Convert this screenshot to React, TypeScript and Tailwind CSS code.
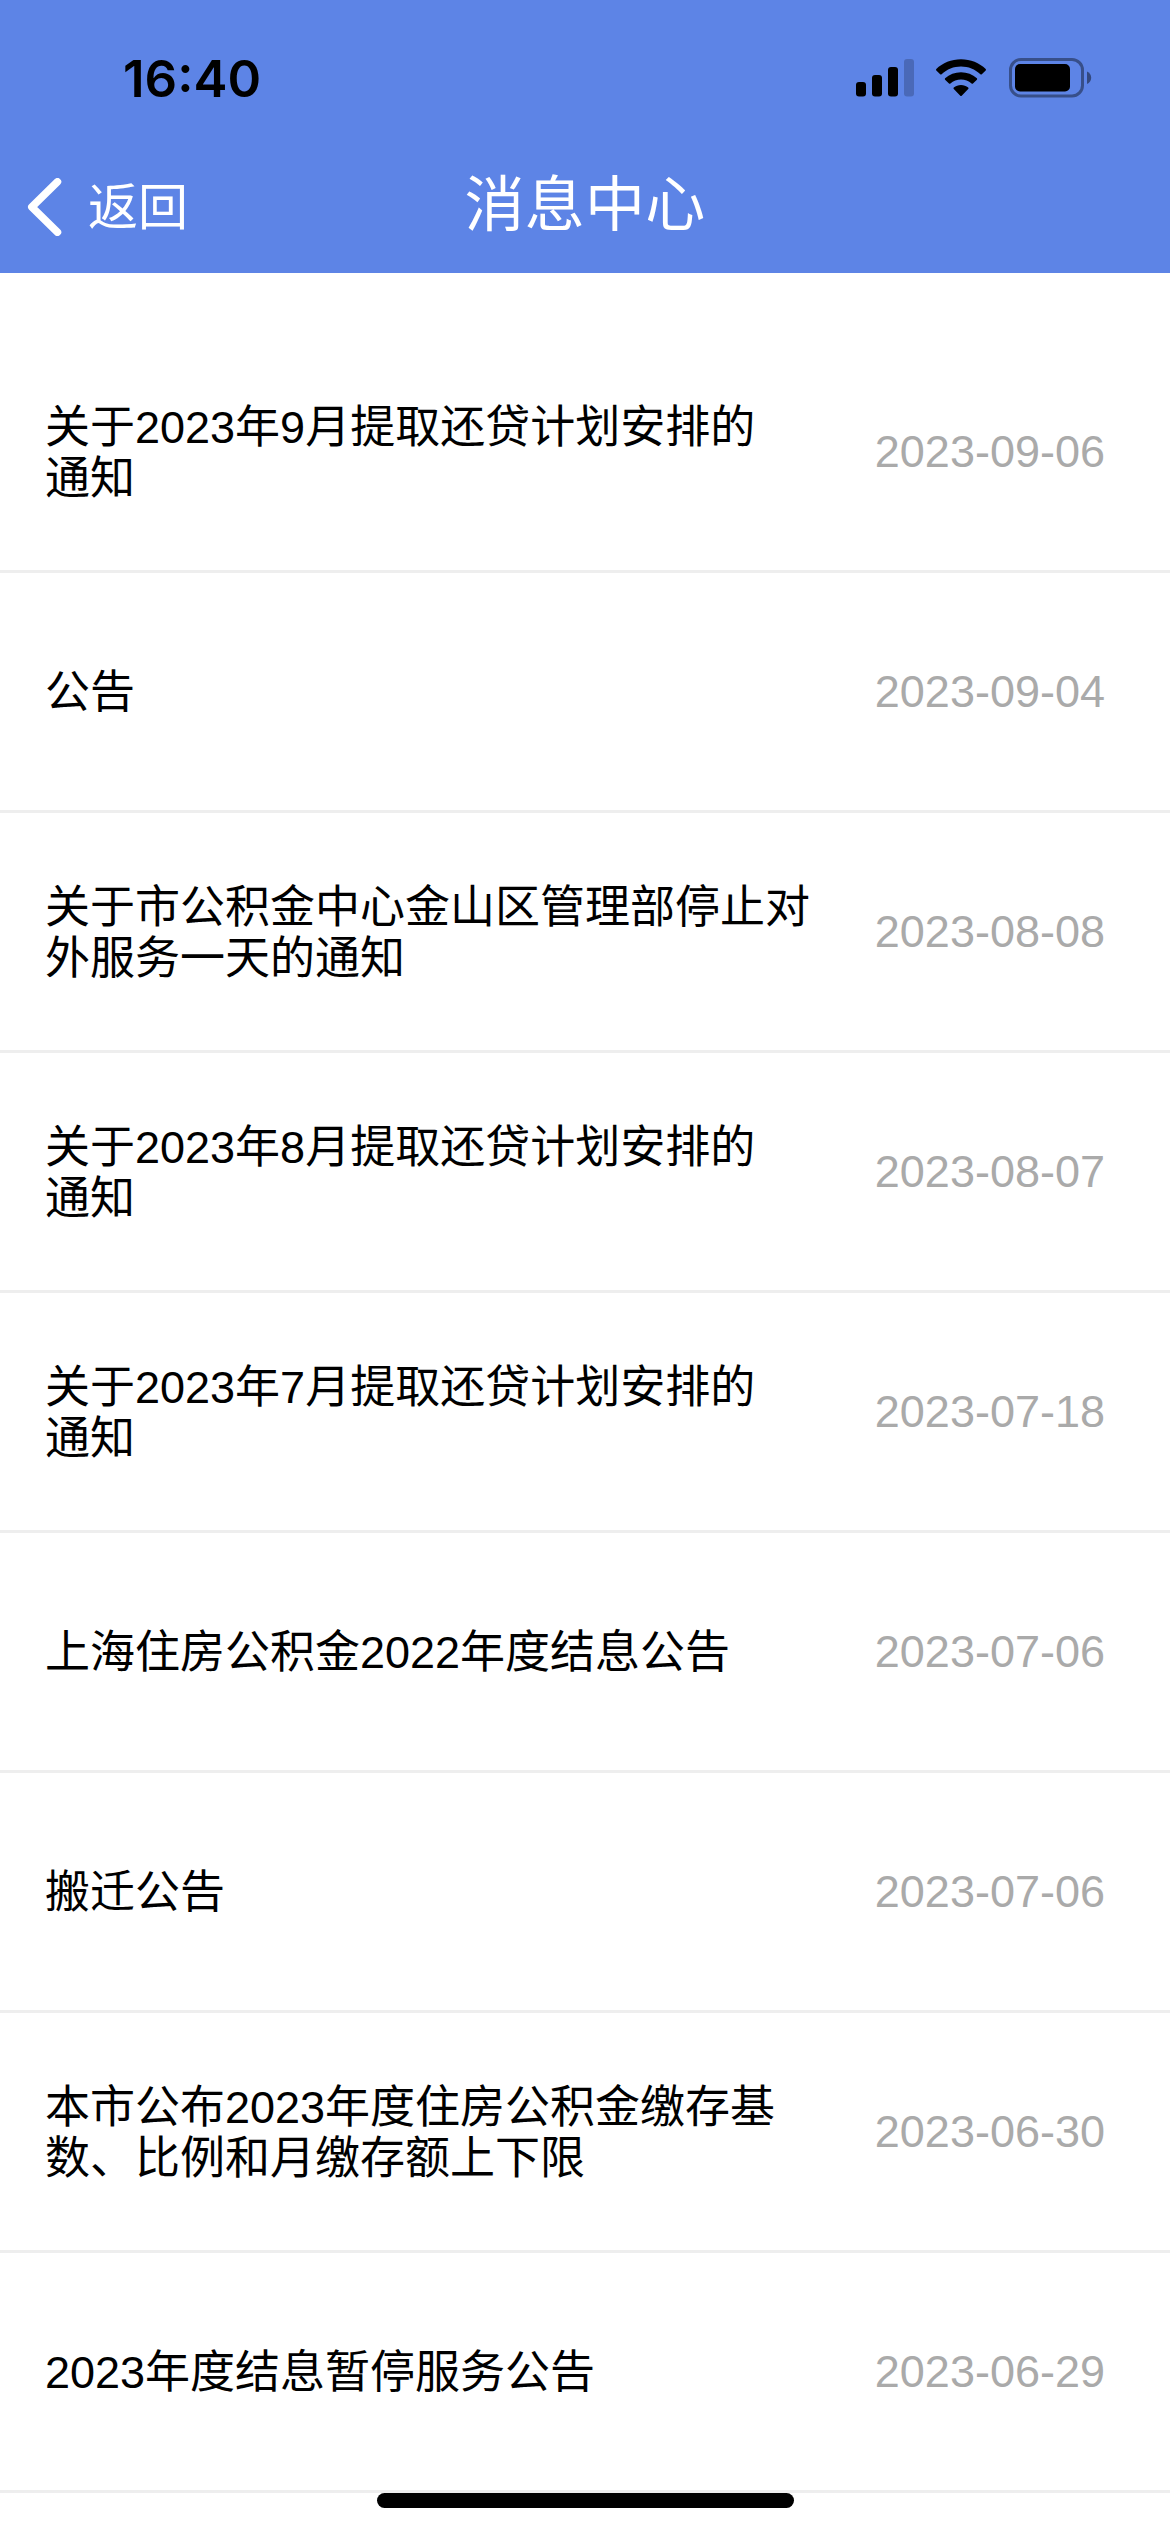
const messages = [
  { title: '关于2023年9月提取还贷计划安排的\n通知', date: '2023-09-06' },
  { title: '公告', date: '2023-09-04' },
  { title: '关于市公积金中心金山区管理部停止对\n外服务一天的通知', date: '2023-08-08' },
  { title: '关于2023年8月提取还贷计划安排的\n通知', date: '2023-08-07' },
  { title: '关于2023年7月提取还贷计划安排的\n通知', date: '2023-07-18' },
  { title: '上海住房公积金2022年度结息公告', date: '2023-07-06' },
  { title: '搬迁公告', date: '2023-07-06' },
  { title: '本市公布2023年度住房公积金缴存基\n数、比例和月缴存额上下限', date: '2023-06-30' },
  { title: '2023年度结息暂停服务公告', date: '2023-06-29' },
];

function SignalIcon() {
  return (
    <svg className="h-[38px] w-[58px]" viewBox="0 0 58 38">
      <rect x="0" y="23" width="10" height="14.5" rx="3" />
      <rect x="16" y="16" width="10" height="21.5" rx="3" />
      <rect x="32" y="8" width="10" height="29.5" rx="3" />
      <rect x="48" y="0" width="10" height="37.5" rx="3" opacity=".2" />
    </svg>
  );
}

function WifiIcon() {
  return (
    <svg className="ml-[22px] h-[38px] w-[50px]" viewBox="0 0 50 38">
      <path d="M25 0.3C34.5 .3 43.500 4 49.700 10Q50.300 10.800 49.700 11.500L45.800 15.300Q45.100 15.900 44.400 15.300C39 10.300 32.300 7.600 25 7.600S11 10.300 5.600 15.300Q4.900 15.900 4.200 15.300L.3 11.500Q-.3 10.800 .3 10C6.500 4 15.500 .3 25 .3Z" />
      <path d="M25 13.200C31 13.200 36.600 15.400 40.900 19.300Q41.500 20 40.900 20.700L37 24.500Q36.300 25.100 35.600 24.500C32.700 21.900 29 20.500 25 20.500S17.300 21.900 14.400 24.500Q13.700 25.100 13 24.500L9.100 20.700Q8.500 20 9.100 19.300C13.400 15.400 19 13.200 25 13.200Z" />
      <path d="M25 26C27.700 26 30.200 26.900 32.200 28.500Q33 29.300 32.200 30.100L25.700 36.700Q25 37.300 24.300 36.700L17.800 30.100Q17 29.300 17.800 28.500C19.800 26.900 22.300 26 25 26Z" />
    </svg>
  );
}

function BatteryIcon() {
  return (
    <svg className="ml-[23px] h-[40px] w-[83px]" viewBox="0 0 83 40">
      <rect x="1.500" y="1.500" width="72" height="36.500" rx="10.500" fill="none" stroke="#000" strokeWidth="3" opacity=".4" />
      <rect x="6" y="6" width="55" height="27.500" rx="5" />
      <path d="M78 13.500C80.600 14.600 82.200 17 82.200 19.700S80.600 24.900 78 26Z" opacity=".45" />
    </svg>
  );
}

function StatusBar() {
  return (
    <div className="flex h-[156px] items-center justify-between pl-[123px] pr-[78px]">
      <span className="font-['Inter'] text-[51px] font-semibold leading-none text-black">16:40</span>
      <div className="flex items-center">
        <SignalIcon />
        <WifiIcon />
        <BatteryIcon />
      </div>
    </div>
  );
}

export default function App() {
  return (
    <div className="relative h-[2532px] w-[1170px] overflow-hidden bg-white font-['Liberation_Sans','Noto_Sans_CJK_SC',sans-serif]">
      <header className="h-[273px] bg-[#5d84e6]">
        <StatusBar />
        <div className="grid h-[100px] grid-cols-3 items-center text-white">
          <button className="flex items-center pl-[27px] pt-px text-[50px]">
            <svg className="h-[58px] w-[35px]" viewBox="0 0 35 58" fill="none" stroke="currentColor" strokeWidth="7.500" strokeLinecap="round" strokeLinejoin="round">
              <path d="M30.500 3.800L4.800 29L30.500 54.200" />
            </svg>
            <span className="ml-[26px] pt-1">返回</span>
          </button>
          <h1 className="text-center text-[60px] tracking-[0.3px]">消息中心</h1>
        </div>
      </header>
      <ul className="pt-[60px]">
        {messages.map(({ title, date }) => (
          <li key={title} className="flex h-[240px] items-center border-b-[3px] border-[#eee] pl-[45px] pr-[65px]">
            <p className="flex-1 whitespace-pre pt-0.5 text-[45px] leading-[51px] text-black">{title}</p>
            <time className="text-[45px] text-[#aaa]">{date}</time>
          </li>
        ))}
      </ul>
      <div className="absolute left-[377px] top-[2493px] h-[15px] w-[417px] rounded-full bg-black" />
    </div>
  );
}
